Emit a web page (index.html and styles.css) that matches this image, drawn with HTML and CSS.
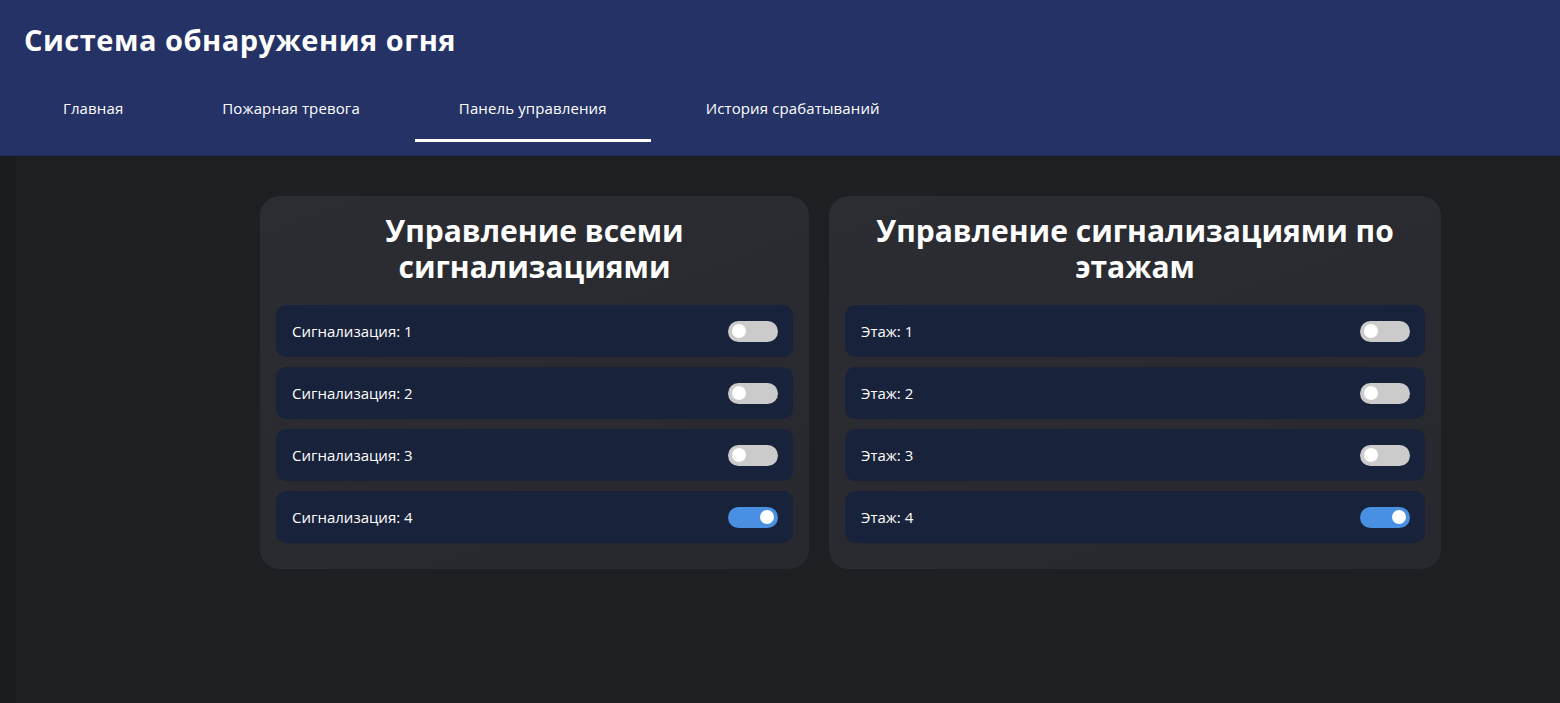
FILE: index.html
```html
<!DOCTYPE html>
<html lang="ru">
<head>
<meta charset="utf-8">
<title>Система обнаружения огня</title>
<link rel="stylesheet" href="styles.css">
</head>
<body>
<header class="topbar">
  <h1 class="brand">Система обнаружения огня</h1>
  <nav class="tabs">
    <a class="tab">Главная</a>
    <a class="tab">Пожарная тревога</a>
    <a class="tab tab-active">Панель управления</a>
    <a class="tab">История срабатываний</a>
  </nav>
</header>
<div class="page">
  <aside class="rail"></aside>
  <main class="content">
    <section class="card card-all">
      <h2 class="card-title">Управление всеми сигнализациями</h2>
      <div class="rows">
        <div class="row"><span class="row-label">Сигнализация: 1</span><span class="switch"><span class="knob"></span></span></div>
        <div class="row"><span class="row-label">Сигнализация: 2</span><span class="switch"><span class="knob"></span></span></div>
        <div class="row"><span class="row-label">Сигнализация: 3</span><span class="switch"><span class="knob"></span></span></div>
        <div class="row"><span class="row-label">Сигнализация: 4</span><span class="switch switch-on"><span class="knob"></span></span></div>
      </div>
    </section>
    <section class="card card-floors">
      <h2 class="card-title">Управление сигнализациями по этажам</h2>
      <div class="rows">
        <div class="row"><span class="row-label">Этаж: 1</span><span class="switch"><span class="knob"></span></span></div>
        <div class="row"><span class="row-label">Этаж: 2</span><span class="switch"><span class="knob"></span></span></div>
        <div class="row"><span class="row-label">Этаж: 3</span><span class="switch"><span class="knob"></span></span></div>
        <div class="row"><span class="row-label">Этаж: 4</span><span class="switch switch-on"><span class="knob"></span></span></div>
      </div>
    </section>
  </main>
</div>
</body>
</html>
```

FILE: styles.css
```css
* { box-sizing: border-box; }
html, body { margin: 0; height: 100%; }
body {
  font-family: "Open Sans", "Liberation Sans", sans-serif;
  color: #fff;
  background: #1e1f22;
  overflow: hidden;
}
.topbar {
  background: #253266;
  height: 156px;
  border-bottom: 1px solid #1f2a58;
}
.brand {
  margin: 0;
  padding: 22px 24px 0;
  font-size: 29px;
  line-height: 36px;
  font-weight: 700;
  letter-spacing: 0.5px;
}
.tabs {
  display: flex;
  gap: 11px;
  padding-left: 19px;
  margin-top: 20px;
}
.tab {
  display: block;
  padding: 20px 44px 21px;
  font-size: 15px;
  line-height: 20px;
  letter-spacing: 0.12px;
  color: #fff;
  border-bottom: 3px solid transparent;
}
.tab-active { border-bottom-color: #fff; }
.page {
  display: flex;
  height: calc(100% - 156px);
}
.rail {
  width: 16px;
  flex: none;
  background: #1a1b1e;
}
.content {
  flex: 1;
  display: flex;
  align-items: flex-start;
  gap: 20px;
  padding: 40px 0 0 244px;
}
.card {
  background: linear-gradient(160deg, #2b2d32, #28292e);
  border-radius: 20px;
  padding: 17px 16px 26px;
}
.card-all { width: 549px; }
.card-floors { width: 612px; }
.card-title {
  margin: 0 0 20px;
  text-align: center;
  font-size: 30px;
  line-height: 36px;
  font-weight: 700;
}
.rows {
  display: flex;
  flex-direction: column;
  gap: 10px;
}
.row {
  height: 52px;
  background: #18223a;
  border-radius: 10px;
  padding: 0 16px 0 16px;
  display: flex;
  align-items: center;
  justify-content: space-between;
  font-size: 15px;
}
.switch {
  width: 50px;
  height: 21px;
  border-radius: 11px;
  background: #cbcbcb;
  display: flex;
  align-items: center;
  padding: 0 4px;
  margin-right: -1px;
}
.knob {
  width: 14px;
  height: 14px;
  border-radius: 50%;
  background: #fff;
}
.switch-on {
  background: #4a90e2;
  justify-content: flex-end;
}
```
